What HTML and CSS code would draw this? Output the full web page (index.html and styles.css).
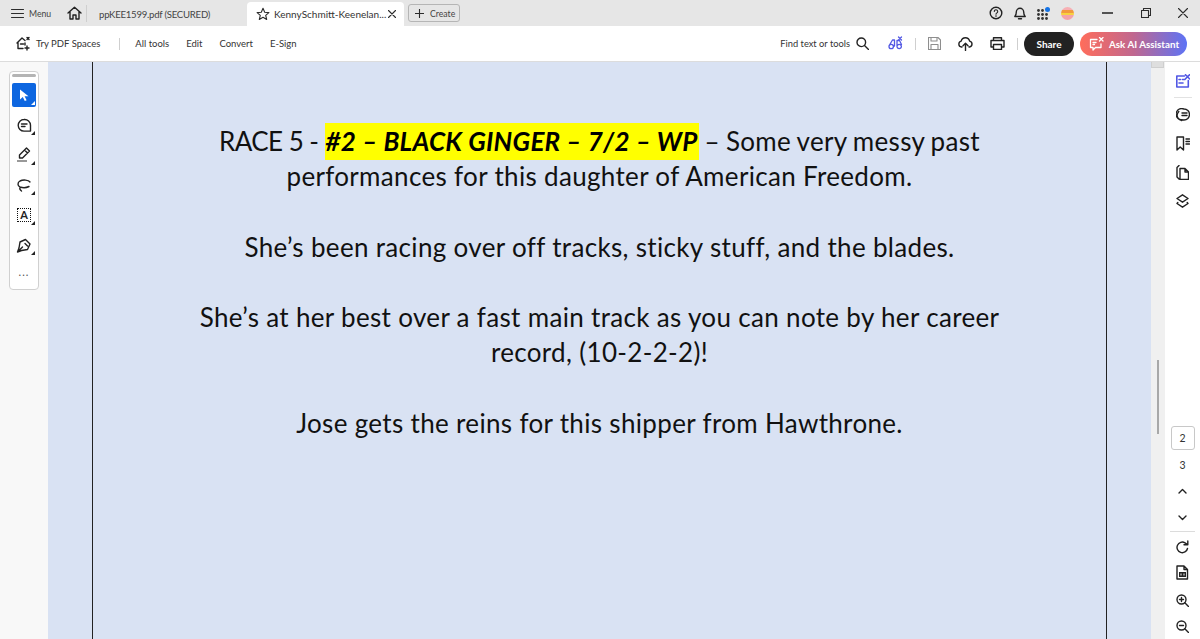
FILE: index.html
```html
<!DOCTYPE html>
<html lang="en">
<head>
<meta charset="utf-8">
<title>Acrobat</title>
<link rel="stylesheet" href="styles.css">
</head>
<body>
<div class="app">
  <header class="titlebar">
    <div class="menu">
      <svg width="13" height="11" viewBox="0 0 13 11"><path d="M.5 1.500h12M.5 5.500h12M.5 9.500h12" class="s"/></svg>
      <span>Menu</span>
    </div>
    <svg class="home" width="15" height="14" viewBox="0 0 15 14"><path d="M1 7 7.500 1.200 14 7M3 5.500v7.500h3V9h3v4h3V5.500" class="s2"/></svg>
    <div class="tsep"></div>
    <div class="tab">ppKEE1599.pdf (SECURED)</div>
    <div class="tab active">
      <svg width="14" height="14" viewBox="0 0 14 14"><path d="M7 1.300 8.700 5.200l4.200.4-3.200 2.800 1 4.100L7 10.300 3.300 12.500l1-4.100L1.100 5.600l4.200-.4z" class="s"/></svg>
      <span class="tabname">KennySchmitt-Keenelan...</span>
      <svg width="8" height="8" viewBox="0 0 8 8"><path d="M.5.500l7 7M7.500.500l-7 7" class="s"/></svg>
    </div>
    <div class="create"><svg width="9" height="9" viewBox="0 0 9 9"><path d="M4.500 0v9M0 4.500h9" class="s"/></svg><span>Create</span></div>
    <div class="spacer"></div>
    <div class="ticons">
      <svg width="14" height="14" viewBox="0 0 14 14"><circle cx="7" cy="7" r="5.800" class="s2"/><path d="M5.300 5.500a1.700 1.700 0 1 1 2.600 1.400c-.6.400-.9.700-.9 1.300M7 9.500v1" class="s"/></svg>
      <svg width="12" height="14" viewBox="0 0 12 14"><path d="M.8 10.500c1.200-1 1.500-2 1.500-4.500a3.700 3.700 0 0 1 7.400 0c0 2.500.3 3.500 1.500 4.500zM4.500 12.800h3" class="s2"/></svg>
      <svg width="13" height="13" viewBox="0 0 13 13"><g fill="#333"><circle cx="1.500" cy="3.500" r="1.400"/><circle cx="5.500" cy="3.500" r="1.400"/><circle cx="1.500" cy="7.500" r="1.400"/><circle cx="5.500" cy="7.500" r="1.400"/><circle cx="9.500" cy="7.500" r="1.400"/><circle cx="1.500" cy="11.500" r="1.400"/><circle cx="5.500" cy="11.500" r="1.400"/><circle cx="9.500" cy="11.500" r="1.400"/></g><circle cx="10.500" cy="2.500" r="2.500" fill="#1473e6"/></svg>
      <div class="avatar"></div>
    </div>
    <div class="win">
      <svg class="winmin" width="11" height="2" viewBox="0 0 11 2"><path d="M0 1h11" class="s2"/></svg>
      <svg class="winmax" width="10" height="10" viewBox="0 0 10 10"><path d="M.5 2.500h7v7h-7zM2.500 2.500v-2h7v7h-2" class="s"/></svg>
      <svg width="10" height="10" viewBox="0 0 10 10"><path d="M.5.500l9 9M9.500.500l-9 9" class="s"/></svg>
    </div>
  </header>

  <nav class="toolbar">
    <div class="spaces">
      <svg width="15" height="15" viewBox="0 0 15 15"><path d="M1 7 6 2l3 2.500M2 6.500v6h5M9 7v2M11 1.500l2 2M13 1.500l-2 2M11 10v4M9 12h4M4.500 8h3" class="s2"/></svg>
      <span>Try PDF Spaces</span>
    </div>
    <div class="vsep"></div>
    <div class="navitems"><span>All tools</span><span>Edit</span><span>Convert</span><span>E-Sign</span></div>
    <div class="spacer"></div>
    <div class="find"><span>Find text or tools</span>
      <svg width="13" height="13" viewBox="0 0 13 13"><circle cx="5.300" cy="5.300" r="4.300" class="s2"/><path d="M8.500 8.500 12.500 12.500" class="s2"/></svg>
    </div>
    <svg class="tools" width="15" height="15" viewBox="0 0 15 15"><path d="M1 10.500a2.200 2.200 0 1 0 4.400 0 2.200 2.200 0 1 0-4.400 0zM9 10.500a2.200 2.200 0 1 0 4.400 0 2.200 2.200 0 1 0-4.400 0zM1.500 9 4.500 4h2v6M9 10V4.500h2.500l2 4M10.500 1l3 3M13.500 1l-3 3" class="p"/></svg>
    <div class="vsep small"></div>
    <svg class="save" width="13" height="13" viewBox="0 0 13 13"><path d="M.5.500h9.500l2.500 2.500v9.500H.5zM3 .5v3.500h6V.5M3 12.500V7.500h7v5" class="g"/></svg>
    <svg class="cloud" width="15" height="14" viewBox="0 0 15 14"><path d="M4 10H3.500a3 3 0 0 1-.3-5.900 4.300 4.300 0 0 1 8.400 0A3 3 0 0 1 11.500 10H11M7.500 13.500V6.500M5 8.800l2.500-2.500L10 8.800" class="s2"/></svg>
    <svg class="print" width="15" height="13" viewBox="0 0 15 13"><path d="M3.500 3.500V.7h8v2.800M3.500 10H1V3.500h13V10h-2.500M3.500 7.500h8v5h-8z" class="s2"/></svg>
    <div class="vsep small"></div>
    <div class="share">Share</div>
    <div class="ask">
      <svg width="15" height="14" viewBox="0 0 15 14"><path d="M8 2.500H1.500v8h2.500v2.500l2.500-2.500h5.500V7M10.500.5l3.500 3.500M14 .5l-3.500 3.500M4 5.500h3M4 7.500h1.500" class="w"/></svg>
      <span>Ask AI Assistant</span>
    </div>
  </nav>

  <div class="workspace">
    <aside class="lefttools">
      <div class="palette">
        <div class="grip"></div>
        <div class="tool selected"><svg width="11" height="13" viewBox="0 0 11 13"><path d="M1 .5v10l2.800-2.400 2 4 1.800-.9-2-3.900H9.500z" fill="#fff"/></svg></div>
        <div class="tool"><svg width="15" height="15" viewBox="0 0 15 15"><path d="M7 1.500a5.800 5.800 0 1 0 0 11.600h6.500V7.300A5.800 5.800 0 0 0 7 1.500zM4.500 6h5.500M4.500 8.500h3.500" class="s2"/></svg></div>
        <div class="tool"><svg width="16" height="16" viewBox="0 0 16 16"><path d="M10.500 1 13.500 4 6.500 11H3.500V8zM8.500 3 11.500 6" class="s2"/><path d="M1 14h10" stroke="#999" stroke-width="2"/></svg></div>
        <div class="tool"><svg width="15" height="13" viewBox="0 0 15 13"><path d="M13 3C11.500 .8 6 .5 3 2 .2 3.500.5 7 3 8c3 1 7 .5 9-.5M3 8c-.5 1.500 0 3 1.500 4" class="s2"/></svg></div>
        <div class="tool"><div class="textbox">A</div></div>
        <div class="tool"><svg width="16" height="15" viewBox="0 0 16 15"><path d="M9.500 1.500 14 6l-2.500 5.500-6 1-4 1.500 1.500-4 1-6zM2 13.500l4.500-4.500M9 5.500l2.500 2.500" class="s2"/></svg></div>
        <div class="dots">...</div>
      </div>
    </aside>

    <main class="doc">
      <article class="page">
        <p><span class="lead">RACE 5 - </span><mark>#2 – BLACK GINGER – 7/2 – WP</mark><span class="tail"> – Some very messy past</span><br>performances for this daughter of American Freedom.</p>
        <p>She’s been racing over off tracks, sticky stuff, and the blades.</p>
        <p>She’s at her best over a fast main track as you can note by her career<br>record, (10-2-2-2)!</p>
        <p>Jose gets the reins for this shipper from Hawthrone.</p>
      </article>
    </main>

    <div class="scroll"><div class="scrolltop"></div><div class="thumb"></div></div>

    <aside class="rail">
      <div class="railtop">
        <svg class="railai" width="14" height="14" viewBox="0 0 14 14"><path d="M8.500 2H.8v11h11.500V6.500M3 5.500h1.500M3 9h4M6.500 5.500H9M9.500.8l4 4M13.500.8l-4 4" class="p2"/></svg>
        <div class="hsep"></div>
        <svg width="14" height="14" viewBox="0 0 14 14"><path d="M8 1a5.500 5.500 0 1 1 0 11c-2 0-3.500 0-4.500-.5A5.500 5.500 0 0 1 8 1zM6 5h5M6 7.500h5M2.800 3.500a5.500 5.500 0 0 0 0 7.500l3 1.500" class="s2"/></svg>
        <svg width="14" height="15" viewBox="0 0 14 15"><path d="M1 1h6.500v13L4.200 11 1 14zM10 3h3.500M10 5.500h3.500M10 8h3.500" class="s2"/></svg>
        <svg width="13" height="15" viewBox="0 0 13 15"><path d="M3 14 1 12V2.500l2-2M4 3.500h5l3.500 3.500v7.500H4zM9 3.500V7h3.500" class="s2"/></svg>
        <svg width="13" height="14" viewBox="0 0 13 14"><path d="M6.500.800 12 4.500 6.500 8.200 1 4.500zM1.800 8.500 1 9.500l5.500 3.700 5.500-3.700-.8-1" class="s2"/></svg>
      </div>
      <div class="railbottom">
        <div class="pagebox">2</div>
        <div class="pagenum">3</div>
        <svg class="chev" width="9" height="6" viewBox="0 0 9 6"><path d="M1 5l3.500-3.500L8 5" class="s2"/></svg>
        <svg class="chev down" width="9" height="6" viewBox="0 0 9 6"><path d="M1 1l3.500 3.500L8 1" class="s2"/></svg>
        <div class="hsep wide"></div>
        <svg class="rb refresh" width="13" height="14" viewBox="0 0 13 14"><path d="M11.500 8.500A5.300 5.300 0 1 1 9 2.800L11.500 4.500M11.800 1v3.700H8" class="s2"/></svg>
        <svg class="rb file" width="13" height="15" viewBox="0 0 13 15"><path d="M1 1h7l3.500 3.500V14H1zM8 1v3.500h3.500" class="s2"/><path d="M3 7h7v5H3z" fill="#222"/><path d="M5 8.500v2M8 8.500v2" stroke="#fff" fill="none"/></svg>
        <svg class="rb plus" width="13" height="13" viewBox="0 0 13 13"><circle cx="5.500" cy="5.500" r="4.500" class="s2"/><path d="M8.800 8.800 12.500 12.500M3.500 5.500h4M5.500 3.500v4" class="s2"/></svg>
        <svg class="rb minus" width="13" height="13" viewBox="0 0 13 13"><circle cx="5.500" cy="5.500" r="4.500" class="s2"/><path d="M8.800 8.800 12.500 12.500M3.500 5.500h4" class="s2"/></svg>
      </div>
    </aside>
  </div>
</div>
</body>
</html>
```

FILE: styles.css
```css
* { box-sizing: border-box; }
html, body { margin: 0; height: 100%; overflow: hidden; }
body { font-family: Lato, "Open Sans", sans-serif; color: #2c2c2c; background: #fff; }
.app { display: flex; flex-direction: column; width: 1200px; height: 639px; }
.spacer { flex: 1; }
.s, .s2, .p, .p2, .g, .w { fill: none; stroke-linecap: round; stroke-linejoin: round; }
.s { stroke: #2c2c2c; stroke-width: 1.100; }
.s2 { stroke: #222; stroke-width: 1.400; }
.p { stroke: #5258e4; stroke-width: 1.300; }
.p2 { stroke: #5258e4; stroke-width: 1.600; }
.g { stroke: #8e8e8e; stroke-width: 1.100; }
.w { stroke: #fff; stroke-width: 1.300; }

.titlebar { height: 26px; flex: none; background: #e6e6e6; display: flex; align-items: center; font-size: 8.700px; }
.menu { display: flex; align-items: center; gap: 5px; width: 67px; padding-left: 11px; color: #444; }
.home { flex: none; }
.tsep { width: 1px; height: 17px; background: #cfcfcf; margin-left: 4px; }
.tab { height: 24px; margin-top: 2px; display: flex; align-items: center; color: #444; font-size: 9.600px; letter-spacing: -.25px; padding-left: 12px; width: 160px; white-space: nowrap; }
.tab.active { background: #fff; border-radius: 4px 4px 0 0; width: 157px; padding-left: 9px; margin-right: 4px; color: #333; letter-spacing: 0; }
.tabname { width: 107px; margin: 0 7px 0 4px; white-space: nowrap; font-size: 10px; }
.create { height: 18px; width: 52px; border: 1px solid #b5b5b5; border-radius: 3px; display: flex; align-items: center; gap: 6px; padding-left: 6px; color: #444; font-size: 8.700px; }
.ticons { display: flex; align-items: center; gap: 11px; margin-right: 28px; }
.avatar { width: 13px; height: 13px; border-radius: 50%; background: linear-gradient(#f7b0b4 0 20%, #f29a3d 20% 45%, #f7d23f 45% 65%, #f4a3a8 65%); }
.win { display: flex; align-items: center; width: 98px; }
.winmin { margin-right: 28px; }
.winmax { margin-right: 27px; }

.toolbar { height: 36px; flex: none; background: #fff; border-bottom: 1px solid #dcdcdc; display: flex; align-items: center; font-size: 9.500px; color: #333; }
.spaces { display: flex; align-items: center; gap: 5px; margin-left: 16px; }
.vsep { width: 1px; height: 12px; background: #cfcfcf; margin: 0 15px 0 19px; }
.vsep.small { margin: 0; }
.navitems { display: flex; gap: 17px; }
.find { display: flex; align-items: center; gap: 6px; margin-right: 19px; font-size: 9.300px; }
.tools { margin-right: 12px; }
.save { margin: 0 17px 0 12px; }
.cloud { margin-right: 17px; }
.print { margin-right: 12px; }
.share { width: 50px; height: 24px; margin-left: 6px; background: #222; color: #fff; border-radius: 12px; display: flex; align-items: center; justify-content: center; font-weight: 700; font-size: 10px; }
.ask { width: 107px; height: 24px; margin: 0 13px 0 6px; border-radius: 12px; background: linear-gradient(90deg, #ff6d5b, #c0678f 50%, #5d73f5); color: #fff; display: flex; align-items: center; gap: 5px; padding-left: 9px; font-weight: 700; font-size: 9.800px; }

.workspace { flex: 1; display: flex; min-height: 0; }
.lefttools { width: 48px; flex: none; background: #f8f8f8; padding: 9px 0 0 9px; }
.palette { width: 30px; height: 219px; background: #fff; border: 1px solid #d0d0d0; border-radius: 4px; display: flex; flex-direction: column; align-items: center; padding-top: 2px; }
.grip { width: 24px; height: 3px; background: #b4b4b4; border-radius: 2px; margin-bottom: 6px; }
.tool { width: 24px; height: 24px; border-radius: 2px; display: flex; align-items: center; justify-content: center; margin-bottom: 6px; position: relative; }
.tool::after { content: ""; position: absolute; right: 1px; bottom: 2px; border-style: solid; border-width: 0 0 4px 4px; border-color: transparent transparent #222 transparent; }
.tool.selected { background: #0d66e0; }
.tool.selected::after { border-bottom-color: #fff; }
.textbox { width: 14px; height: 14px; border: 1px dotted #111; font-size: 11px; font-weight: 700; line-height: 12px; text-align: center; color: #222; }
.dots { font-size: 11px; letter-spacing: 1px; color: #555; line-height: 12px; margin-top: 3px; }

.doc { flex: 1; background: #d9e2f3; padding: 0 44px; min-width: 0; }
.page { height: 100%; border: solid #222; border-width: 0 1px; padding-top: 62px; text-align: center; font-size: 26px; line-height: 35.200px; color: #111; letter-spacing: .33px; }
.page p { margin: 0 0 35.200px; }
.lead { letter-spacing: -.55px; }
.tail { word-spacing: -1px; }
.page mark { background: #ffff00; color: #000; font-weight: 700; font-style: italic; letter-spacing: .25px; padding: 2px 1px 2.500px; }

.scroll { width: 14px; flex: none; background: #f0f0f0; position: relative; }
.scrolltop { width: 13px; height: 6px; background: #dedede; border: 1px solid #cfcfcf; border-top: 0; }
.thumb { position: absolute; left: 6px; top: 298px; width: 2px; height: 74px; background: #a8a8a8; }

.rail { width: 35px; flex: none; background: #fff; display: flex; flex-direction: column; justify-content: space-between; align-items: center; padding: 12px 0 0; }
.railtop { display: flex; flex-direction: column; align-items: center; gap: 14px; }
.railtop .hsep { margin: -5px 0 -4px; }
.hsep { width: 18px; height: 1px; background: #e2e2e2; flex: none; }
.hsep.wide { width: 25px; margin: 10px 0 8px; background: #dcdcdc; }
.railbottom { display: flex; flex-direction: column; align-items: center; margin-bottom: 6px; font-size: 10.500px; }
.railbottom svg { flex: none; }
.pagebox { width: 24px; height: 24px; border: 1px solid #c8c8c8; border-radius: 3px; display: flex; align-items: center; justify-content: center; color: #333; }
.pagenum { height: 26px; margin-top: 2px; display: flex; align-items: center; color: #333; margin-bottom: 10px; }
.chev { margin-bottom: 21px; }
.chev.down { margin-bottom: 0; }
.file { margin-top: 11px; }
.plus { margin-top: 14px; }
.minus { margin-top: 13px; }
```
